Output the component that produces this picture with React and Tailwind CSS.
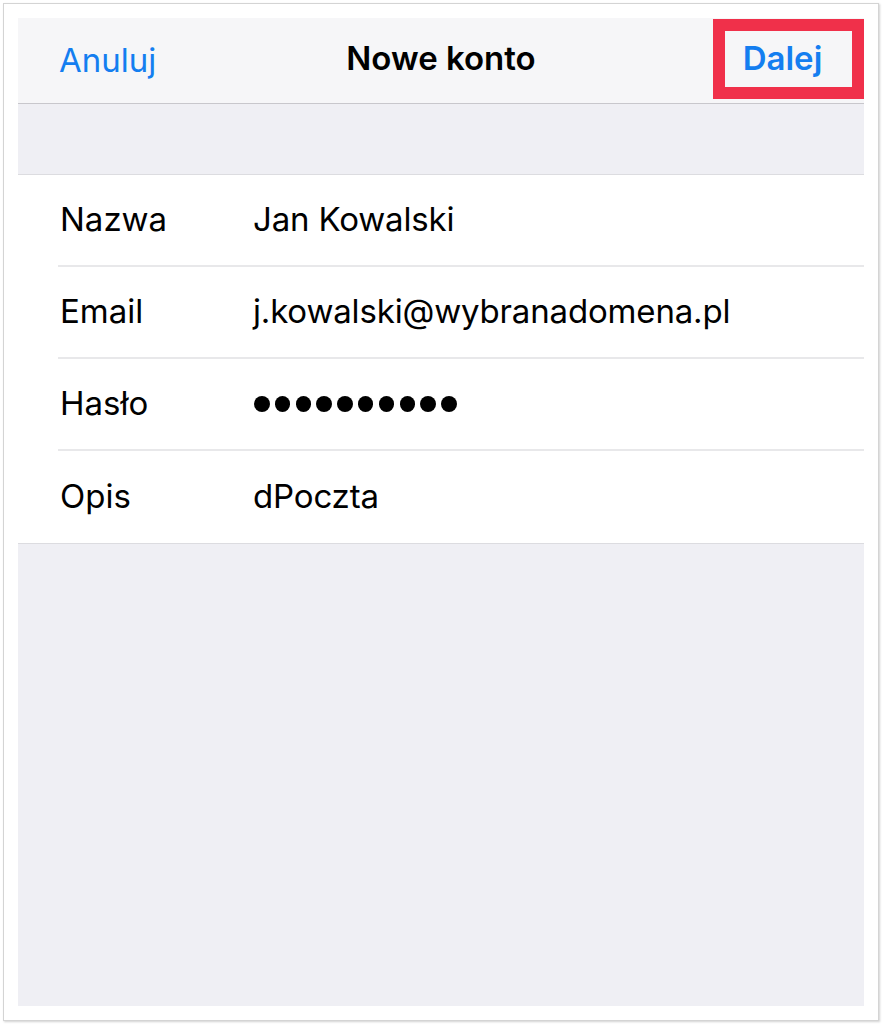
import React from "react";

const rows = [
    { label: "Nazwa", value: "Jan Kowalski" },
    { label: "Email", value: "j.kowalski@wybranadomena.pl" },
    { label: "Hasło", value: null },
    { label: "Opis", value: "dPoczta" },
];

const PasswordDots = ({ count }) => (
    <div className="flex items-center gap-[5.3px] pl-[1px]">
        {Array.from({ length: count }).map((_, i) => (
            <span key={i} className="block w-[15.5px] h-[15.5px] rounded-full bg-black" />
        ))}
    </div>
);

const App = () => {
    return (
        <div className="w-[882px] h-[1024px] bg-white p-[3px] font-['Inter','Noto_Sans',sans-serif]">
            <div className="h-full border border-[#d4d4d4] bg-white p-[14px] shadow-[1px_1px_2px_rgba(0,0,0,0.18)]">
                <div className="h-full flex flex-col bg-[#efeff4]">
                    {/* nav bar */}
                    <div className="relative h-[86px] shrink-0 flex items-center bg-[#f6f6f8] border-b border-[#c8c7cc]">
                        <span className="absolute left-[41px] top-[22px] text-[33px] leading-[40px] text-[#147ef0]">Anuluj</span>
                        <span className="w-full text-center text-[33px] leading-[40px] font-semibold text-black -mt-[6px]">Nowe konto</span>
                        <div className="absolute right-0 top-[1px] w-[151px] h-[80px] border-[12px] border-[#f0304a] flex items-center justify-center">
                            <span className="text-[33px] leading-[40px] font-semibold text-[#147ef0] -mt-[3px] mr-[12px]">Dalej</span>
                        </div>
                    </div>

                    {/* spacer */}
                    <div className="h-[71px] shrink-0 border-b border-[#dcdce0]" />

                    {/* form */}
                    <div className="bg-white border-b border-[#dcdce0]">
                        {rows.map((row, i) => (
                            <div key={row.label} className="pl-[40px]">
                                <div className={"h-[92px] flex items-center text-[33px] text-black " + (i < rows.length - 1 ? "border-b-2 border-[#e8e8ea]" : "")}>
                                    <span className="w-[195px] shrink-0 pl-[2px]">{row.label}</span>
                                    {row.value ? <span className="tracking-[-0.005em]">{row.value}</span> : <PasswordDots count={10} />}
                                </div>
                            </div>
                        ))}
                    </div>

                    <div className="flex-1" />
                </div>
            </div>
        </div>
    );
};

export default App;
